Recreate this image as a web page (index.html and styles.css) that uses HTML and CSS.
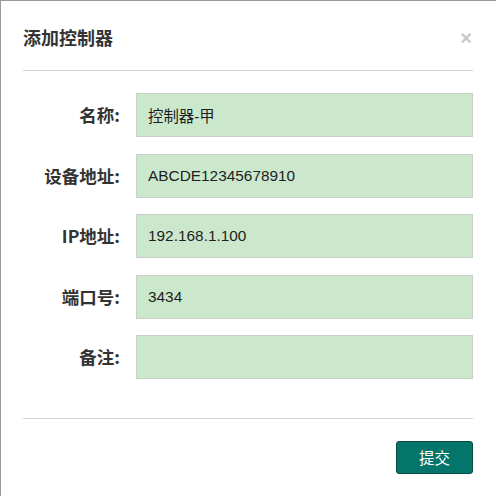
FILE: index.html
```html
<!DOCTYPE html>
<html lang="zh-CN">
<head>
<meta charset="utf-8">
<title>添加控制器</title>
<link rel="stylesheet" href="styles.css">
</head>
<body>
<div class="modal">
  <div class="modal-header">
    <h4 class="modal-title">添加控制器</h4>
    <span class="close">×</span>
  </div>
  <form class="modal-body">
    <div class="row"><label class="label">名称:</label><input class="field" type="text" value="控制器-甲"></div>
    <div class="row"><label class="label">设备地址:</label><input class="field" type="text" value="ABCDE12345678910"></div>
    <div class="row"><label class="label">IP地址:</label><input class="field" type="text" value="192.168.1.100"></div>
    <div class="row"><label class="label">端口号:</label><input class="field" type="text" value="3434"></div>
    <div class="row"><label class="label">备注:</label><input class="field" type="text" value=""></div>
  </form>
  <div class="modal-footer">
    <button class="btn-submit" type="button">提交</button>
  </div>
</div>
</body>
</html>
```

FILE: styles.css
```css
html, body {
  margin: 0;
  padding: 0;
  background: #ffffff;
}
body {
  font-family: "Liberation Sans", "Noto Sans CJK SC", sans-serif;
  color: #333333;
}
.modal {
  box-sizing: border-box;
  width: 496px;
  height: 496px;
  border-top: 1px solid #9a9a9a;
  border-left: 1px solid #9a9a9a;
  padding: 0 23px 0 22px;
  background: #ffffff;
}
.modal-header {
  box-sizing: border-box;
  height: 70px;
  padding-top: 4px;
  border-bottom: 1px solid #d4d4d4;
  display: flex;
  align-items: center;
  justify-content: space-between;
}
.modal-title {
  margin: 0;
  font-family: "Noto Sans CJK SC", sans-serif;
  font-size: 18px;
  font-weight: 700;
  color: #333333;
  line-height: 1.2;
}
.close {
  font-family: "Liberation Sans", sans-serif;
  font-size: 20px;
  font-weight: 700;
  color: #c9c9c9;
  line-height: 1;
  margin-right: 1px;
}
.modal-body {
  margin: 0;
  padding: 22px 0 39px;
  display: flex;
  flex-direction: column;
  gap: 16.5px;
  border-bottom: 1px solid #d4d4d4;
}
.row {
  display: grid;
  grid-template-columns: 97px 1fr;
  column-gap: 16px;
  align-items: center;
}
.label {
  text-align: right;
  font-family: "Noto Sans CJK SC", sans-serif;
  font-size: 17.5px;
  font-weight: 700;
  color: #333333;
  line-height: 1;
}
.field {
  box-sizing: border-box;
  width: 100%;
  height: 44px;
  margin: 0;
  padding: 0 11px;
  border: 1px solid #c9cfc9;
  border-radius: 0;
  background: #cbe8cd;
  font-family: "Liberation Sans", "Noto Sans CJK SC", sans-serif;
  font-size: 15.4px;
  color: #1e1e1e;
  outline: none;
}
.modal-footer {
  display: flex;
  justify-content: flex-end;
  padding-top: 22px;
}
.btn-submit {
  box-sizing: border-box;
  width: 77px;
  height: 33px;
  margin: 0;
  padding: 0;
  border: 1px solid #0c4a42;
  border-radius: 3px;
  background: #03756a;
  color: #ffffff;
  font-family: "Noto Sans CJK SC", sans-serif;
  font-size: 15.5px;
  line-height: 1;
}
```
